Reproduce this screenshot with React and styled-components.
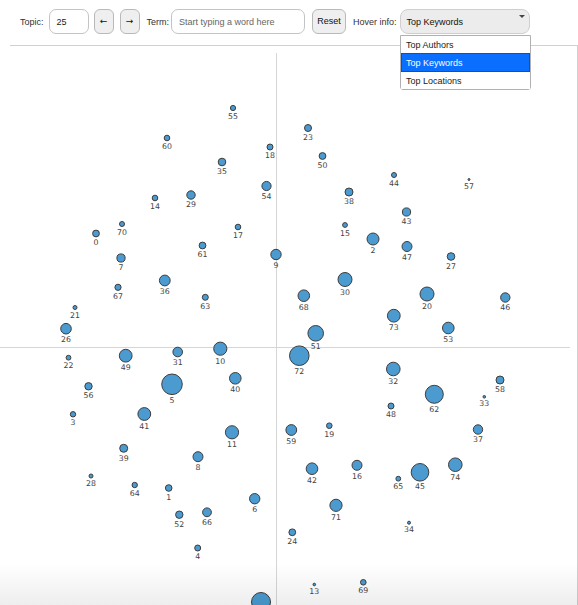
import React from 'react';
import styled, { createGlobalStyle } from 'styled-components';

const GlobalStyle = createGlobalStyle`
  html, body {
    margin: 0;
    padding: 0;
    background: #fff;
    overflow: hidden;
  }
  body {
    font-family: "Liberation Sans", Arial, sans-serif;
  }
`;

const Page = styled.div`
  position: relative;
  width: 578px;
  height: 605px;
  overflow: hidden;
`;

const Toolbar = styled.div`
  display: flex;
  align-items: center;
  height: 45px;
  padding: 0 0 2px 20px;
  box-sizing: border-box;
  font-size: 9px;
  color: #333;
`;

const Label = styled.span`
  margin-right: ${p => p.$gap || 4}px;
  white-space: nowrap;
`;

const TextBox = styled.div`
  width: ${p => p.$w}px;
  height: 25px;
  box-sizing: border-box;
  border: 1px solid #c4c4c4;
  border-radius: 7px;
  display: flex;
  align-items: center;
  padding-left: ${p => p.$pad || 7}px;
  margin-right: ${p => p.$gap || 6}px;
  color: ${p => (p.$placeholder ? '#666' : '#222')};
  background: #fff;
  white-space: nowrap;
`;

const Button = styled.div`
  width: ${p => p.$w}px;
  height: 25px;
  box-sizing: border-box;
  border: 1px solid #b9b9b9;
  border-radius: 6px;
  background: #efefef;
  display: flex;
  align-items: center;
  justify-content: center;
  margin-right: ${p => p.$gap || 6}px;
  color: #111;
  font-size: ${p => p.$fs || 9}px;
  line-height: 1;
`;

const Arrow = styled.span`
  font-family: "DejaVu Sans", sans-serif;
  font-size: 9px;
  line-height: 1;
  display: block;
  margin-top: -1px;
`;

const Select = styled.div`
  position: relative;
  width: 130px;
  height: 25px;
  box-sizing: border-box;
  border: 1px solid #cfcfcf;
  border-radius: 8px;
  background: #ececec;
  display: flex;
  align-items: center;
  padding-left: 6px;
  color: #111;
`;

const Caret = styled.span`
  position: absolute;
  right: 4px;
  top: 5px;
  width: 0;
  height: 0;
  border-left: 3px solid transparent;
  border-right: 3px solid transparent;
  border-top: 3px solid #444;
`;

const Menu = styled.div`
  position: absolute;
  left: 400px;
  top: 35px;
  width: 131px;
  box-sizing: border-box;
  border: 1px solid #b0b0b0;
  border-radius: 0 0 3px 3px;
  background: #fff;
  font-size: 9px;
  color: #222;
  z-index: 5;
`;

const MenuItem = styled.div`
  height: ${p => (p.$active ? 19 : 17)}px;
  box-sizing: border-box;
  display: flex;
  align-items: center;
  padding-left: 4px;
  background: ${p => (p.$active ? '#0a6eff' : '#fff')};
  color: ${p => (p.$active ? '#fff' : '#222')};
  border: 1px solid ${p => (p.$active ? '#3b34d4' : 'transparent')};
`;

const ChartFrame = styled.div`
  margin-left: 10px;
  width: 567px;
  height: 560px;
  border-top: 1px solid #d0d0d0;
  border-right: 1px solid #d0d0d0;
  box-sizing: content-box;
`;

const Plot = styled.svg`
  display: block;
  margin-left: -10px;
  margin-top: -1px;
  overflow: visible;
`;

const Shade = styled.div`
  position: absolute;
  left: 0;
  right: 0;
  bottom: 0;
  height: 42px;
  pointer-events: none;
  background: linear-gradient(to bottom, rgba(0, 0, 0, 0), rgba(0, 0, 0, 0.065));
`;

// [topic, x, y, radius] in page coordinates
const topics = [
  [55, 233, 108, 2.6], [60, 167, 138, 2.8], [23, 308, 128, 3.5], [18, 270, 147, 3],
  [50, 322.5, 156, 3.4], [35, 222, 162, 3.8], [44, 394, 175, 2.5], [57, 469, 179.5, 1],
  [54, 266.5, 186, 4.6], [38, 349, 192, 4], [29, 191, 195, 4.2], [14, 155, 198, 2.8],
  [43, 406.5, 212, 4.1], [70, 122, 224, 2.5], [15, 345, 225, 2.4], [17, 238, 227, 2.8],
  [0, 96, 233.5, 3.4], [2, 373, 239, 6], [61, 202.5, 245.5, 3.4], [47, 407, 246.5, 5],
  [9, 276, 254.5, 5.2], [27, 451, 256.5, 3.8], [7, 121, 258, 4.1], [36, 164.8, 280.5, 5.4],
  [30, 345, 279.5, 7], [67, 118, 287.3, 3.1], [63, 205.3, 297.3, 3], [68, 303.8, 295.7, 5.8],
  [20, 427, 294, 7], [46, 505.3, 297.5, 4.7], [21, 75, 307.5, 2], [73, 393.8, 315.7, 6.4],
  [26, 66, 328.7, 5.3], [51, 315.7, 333.3, 7.8], [53, 448.3, 328, 5.8], [10, 220.3, 348.7, 6.6],
  [31, 177.7, 352, 4.8], [49, 125.7, 355.7, 6.4], [22, 68.5, 357.7, 2.4], [72, 299.3, 355.7, 9.8],
  [32, 393.3, 369, 6.8], [40, 235.3, 378.3, 5.8], [58, 500, 380, 4], [5, 172, 384.3, 10.3],
  [56, 88.5, 386.3, 3.7], [62, 434.3, 394.3, 9], [33, 484.3, 396.8, 1.3], [48, 391, 406, 3],
  [3, 73, 414.3, 2.7], [41, 144.3, 414, 6.4], [19, 329.3, 425.7, 2.8], [59, 291.3, 430, 5.4],
  [11, 232, 432.3, 6.6], [37, 478, 429.5, 4.7], [39, 123.7, 448.3, 4], [8, 198, 456.7, 5],
  [42, 312, 468.7, 5.8], [16, 357, 465.3, 5], [74, 455.3, 464.7, 6.8], [45, 420, 472.3, 8.8],
  [65, 398.3, 478.7, 2.4], [28, 91, 476, 2], [64, 134.7, 485, 2.7], [1, 168.7, 488, 3.3],
  [6, 254.7, 498.7, 5.2], [71, 336, 505.3, 6.1], [52, 179.3, 514.7, 3.7], [66, 207, 512.3, 4.4],
  [34, 409, 522.7, 1.5], [24, 292.3, 532.3, 3.4], [4, 197.7, 548, 3], [13, 314.3, 584.5, 1.3],
  [69, 363.3, 582.3, 2.8], [12, 261, 602, 9.5],
];

const TopicMap = ({ selected }) => {
  const top = 45; // svg starts at the frame's top border
  return (
    <Plot width="578" height="561" viewBox={`0 ${top} 578 561`}>
      <line x1="276.5" y1="53" x2="276.5" y2="620" stroke="#d6d6d6" strokeWidth="1" />
      <line x1="0" y1="347.5" x2="570" y2="347.5" stroke="#d6d6d6" strokeWidth="1" />
      {topics.map(([id, x, y, r]) => (
        <g key={id}>
          <circle
            cx={x}
            cy={y}
            r={r}
            fill={id === selected ? '#d5443f' : '#4b9bd1'}
            stroke="#3d3d3d"
            strokeWidth="1"
          />
          {id !== 12 && (
            <text
              x={x}
              y={y + r + 8.2}
              textAnchor="middle"
              fontFamily='"DejaVu Sans", Verdana, sans-serif'
              fontSize="7.8"
              fill="#444"
            >
              {id}
            </text>
          )}
        </g>
      ))}
    </Plot>
  );
};

const App = () => {
  const options = ['Top Authors', 'Top Keywords', 'Top Locations'];
  return (
    <Page>
      <GlobalStyle />
      <Toolbar>
        <Label $gap={5}>Topic:</Label>
        <TextBox $w={40} $gap={5} $pad={7}>25</TextBox>
        <Button $w={20} $gap={6}><Arrow>←</Arrow></Button>
        <Button $w={20} $gap={7}><Arrow>→</Arrow></Button>
        <Label $gap={2}>Term:</Label>
        <TextBox $w={134} $gap={7} $pad={7} $placeholder>Start typing a word here</TextBox>
        <Button $w={34} $gap={7}>Reset</Button>
        <Label $gap={3}>Hover info:</Label>
        <Select>
          Top Keywords
          <Caret />
        </Select>
      </Toolbar>
      <Menu>
        {options.map(o => (
          <MenuItem key={o} $active={o === 'Top Keywords'}>{o}</MenuItem>
        ))}
      </Menu>
      <ChartFrame>
        <TopicMap selected={25} />
      </ChartFrame>
      <Shade />
    </Page>
  );
};

export default App;
